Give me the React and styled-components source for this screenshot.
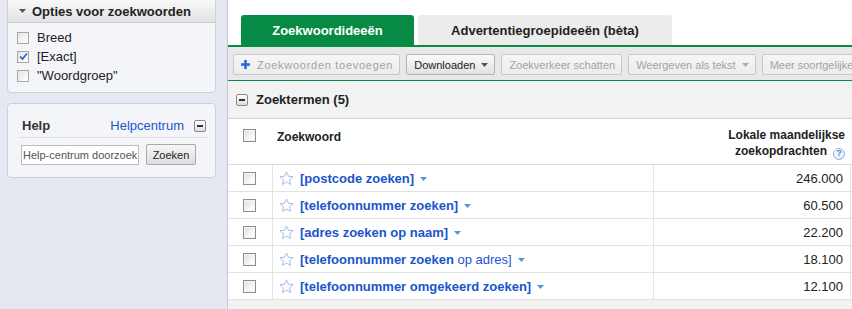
import React from 'react'
import styled, { createGlobalStyle } from 'styled-components'

const GREEN = '#078a43'
const LINK = '#1a55cc'

const GlobalStyle = createGlobalStyle`
  html, body {
    margin: 0;
    padding: 0;
  }
  body {
    font-family: "Liberation Sans", Arial, sans-serif;
    font-size: 13px;
    color: #222;
    background: #fff;
  }
`

const keywords = [
  { bold: '[postcode zoeken]', rest: '', volume: '246.000' },
  { bold: '[telefoonnummer zoeken]', rest: '', volume: '60.500' },
  { bold: '[adres zoeken op naam]', rest: '', volume: '22.200' },
  { bold: '[telefoonnummer zoeken', rest: ' op adres]', volume: '18.100' },
  { bold: '[telefoonnummer omgekeerd zoeken]', rest: '', volume: '12.100' },
]

const matchTypes = [
  { label: 'Breed', checked: false },
  { label: '[Exact]', checked: true },
  { label: '"Woordgroep"', checked: false },
]

const tools = [
  { label: 'Zoekwoorden toevoegen', plus: true, wide: true },
  { label: 'Downloaden', caret: true, enabled: true },
  { label: 'Zoekverkeer schatten' },
  { label: 'Weergeven als tekst', caret: true },
  { label: 'Meer soortgelijke resultaten' },
]

export default function App() {
  return (
    <>
      <GlobalStyle />
      <Page>
        <Sidebar>
          <Panel $top={-1} $flatTop>
            <PanelHeader>
              <HeaderArrow />
              Opties voor zoekwoorden
            </PanelHeader>
            <OptionList>
              {matchTypes.map((m) => (
                <Option key={m.label}>
                  <Check $checked={m.checked}>
                    {m.checked && (
                      <svg width="9" height="9" viewBox="0 0 9 9">
                        <path d="M1 4.5 L3.5 7 L8 1.5" fill="none" stroke="#2c5fc0" strokeWidth="1.6" />
                      </svg>
                    )}
                  </Check>
                  {m.label}
                </Option>
              ))}
            </OptionList>
          </Panel>

          <Panel $top={10}>
            <HelpBody>
              <HelpHead>
                <HelpTitle>Help</HelpTitle>
                <HelpLink>Helpcentrum</HelpLink>
                <Collapse />
              </HelpHead>
              <SearchRow>
                <SearchInput readOnly value="Help-centrum doorzoeken" />
                <SearchButton>Zoeken</SearchButton>
              </SearchRow>
            </HelpBody>
          </Panel>
        </Sidebar>

        <Main>
          <TabBar>
            <Tab $active $width={173}>Zoekwoordideeën</Tab>
            <Tab $width={254}>Advertentiegroepideeën (bèta)</Tab>
          </TabBar>

          <Toolbar>
            {tools.map((t) => (
              <ToolButton key={t.label} $enabled={t.enabled} $wide={t.wide}>
                {t.plus && <PlusIcon />}
                {t.label}
                {t.caret && <Caret $color={t.enabled ? '#555' : '#aaa'} />}
              </ToolButton>
            ))}
          </Toolbar>

          <SectionHead>
            <Collapse />
            <SectionTitle>Zoektermen (5)</SectionTitle>
          </SectionHead>

          <HeadRow>
            <HeadCell>
              <Box />
            </HeadCell>
            <HeadCell $text>Zoekwoord</HeadCell>
            <HeadCell $right>
              Lokale maandelijkse
              <br />
              zoekopdrachten<HelpIcon>?</HelpIcon>
            </HeadCell>
            <div />
          </HeadRow>

          {keywords.map((k) => (
            <Row key={k.bold + k.rest}>
              <Cell $center>
                <Box />
              </Cell>
              <Cell>
                <Star />
                <Keyword>
                  {k.bold}
                  {k.rest && <Plain>{k.rest}</Plain>}
                </Keyword>
                <Caret $color="#5d8fdb" />
              </Cell>
              <Cell $number>{k.volume}</Cell>
              <div />
            </Row>
          ))}
          <Filler />
        </Main>
      </Page>
    </>
  )
}

const HeaderArrow = () => (
  <svg width="7" height="4" viewBox="0 0 7 4" style={{ marginRight: 6 }}>
    <polygon points="0,0 7,0 3.5,4" fill="#555" />
  </svg>
)

const Caret = ({ $color }) => (
  <CaretWrap>
    <svg width="7" height="4" viewBox="0 0 7 4">
      <polygon points="0,0 7,0 3.5,4" fill={$color} />
    </svg>
  </CaretWrap>
)

const PlusIcon = () => (
  <svg width="9" height="9" viewBox="0 0 9 9" style={{ marginRight: 7 }}>
    <rect x="3.2" y="0" width="2.6" height="9" fill="#2a6bd1" />
    <rect x="0" y="3.2" width="9" height="2.6" fill="#2a6bd1" />
  </svg>
)

const Star = () => (
  <svg width="15" height="15" viewBox="0 0 24 24" style={{ marginRight: 6, flexShrink: 0 }}>
    <polygon
      points="12,1.5 15.1,8.4 22.5,9.1 16.9,14.1 18.5,21.5 12,17.7 5.5,21.5 7.1,14.1 1.5,9.1 8.9,8.4"
      fill="#fff"
      stroke="#a3bde8"
      strokeWidth="1.6"
      strokeLinejoin="round"
    />
  </svg>
)

const Page = styled.div`
  display: flex;
  width: 852px;
  height: 309px;
  overflow: hidden;
`

const Sidebar = styled.div`
  box-sizing: border-box;
  width: 228px;
  flex-shrink: 0;
  padding-left: 7px;
  background: #e5e8f1;
  border-right: 1px solid #c4c7ce;
`

const Panel = styled.div`
  box-sizing: border-box;
  width: 209px;
  margin-top: ${({ $top }) => $top}px;
  background: #f4f5f9;
  border: 1px solid #cdd0d7;
  border-radius: ${({ $flatTop }) => ($flatTop ? '0 0 4px 4px' : '4px')};
`

const PanelHeader = styled.div`
  display: flex;
  align-items: center;
  height: 22px;
  padding-left: 11px;
  font-weight: bold;
  color: #222;
  background: linear-gradient(#f8f8f8, #e3e3e3);
  border-bottom: 1px solid #cccccc;
`

const OptionList = styled.div`
  padding: 5px 0 7px 9px;
`

const Option = styled.div`
  display: flex;
  align-items: center;
  height: 19px;
  color: #222;
`

const Check = styled.span`
  box-sizing: border-box;
  display: inline-flex;
  align-items: center;
  justify-content: center;
  width: 12px;
  height: 12px;
  margin-right: 8px;
  border: 1px solid #a7a7a7;
  background: linear-gradient(135deg, #e4e4e4, #ffffff);
`

const HelpBody = styled.div`
  padding: 10px 7px 12px 11px;
`

const HelpHead = styled.div`
  display: flex;
  align-items: center;
  height: 23px;
  padding: 0 2px 0 3px;
  border-bottom: 1px solid #dcdde2;
`

const HelpTitle = styled.span`
  flex: 1;
  font-weight: bold;
  color: #333;
`

const HelpLink = styled.span`
  margin-right: 10px;
  color: ${LINK};
`

const Collapse = styled.span`
  position: relative;
  box-sizing: border-box;
  display: inline-block;
  width: 12px;
  height: 12px;
  border: 1px solid #8a8a8a;
  border-radius: 2px;
  background: linear-gradient(#ffffff, #dcdcdc);

  &::after {
    content: '';
    position: absolute;
    left: 2px;
    top: 4px;
    width: 6px;
    height: 2px;
    background: #333;
  }
`

const SearchRow = styled.div`
  display: flex;
  align-items: center;
  gap: 7px;
  margin-top: 6px;
  padding-left: 2px;
`

const SearchInput = styled.input`
  box-sizing: border-box;
  width: 118px;
  height: 20px;
  padding: 0 1px;
  border: 1px solid #bdbdbd;
  background: #fff;
  font-family: inherit;
  font-size: 11px;
  color: #555;
  outline: none;
`

const SearchButton = styled.button`
  box-sizing: border-box;
  width: 50px;
  height: 21px;
  padding: 0;
  border: 1px solid #a9a9a9;
  border-radius: 2px;
  background: linear-gradient(#f7f7f7, #dddddd);
  font-family: inherit;
  font-size: 11px;
  color: #222;
`

const Main = styled.div`
  flex: 1;
  display: flex;
  flex-direction: column;
  min-width: 0;
  background: #fff;
`

const TabBar = styled.div`
  display: flex;
  align-items: flex-end;
  gap: 4px;
  height: 45px;
  padding-left: 13px;
  border-bottom: 2px solid ${GREEN};
`

const Tab = styled.div`
  width: ${({ $width }) => $width}px;
  height: 30px;
  line-height: 31px;
  text-align: center;
  font-weight: bold;
  border-radius: 3px 3px 0 0;
  color: ${({ $active }) => ($active ? '#fff' : '#222')};
  background: ${({ $active }) => ($active ? GREEN : '#ececec')};
`

const Toolbar = styled.div`
  display: flex;
  align-items: flex-start;
  gap: 6px;
  height: 34px;
  padding: 7px 0 0 5px;
  box-sizing: border-box;
  background: #e8e8e8;
  border-bottom: 1px solid ${GREEN};
  overflow: hidden;
  white-space: nowrap;
`

const ToolButton = styled.div`
  box-sizing: border-box;
  display: flex;
  align-items: center;
  flex-shrink: 0;
  height: 21px;
  padding: 0 6px 0 7px;
  border: 1px solid ${({ $enabled }) => ($enabled ? '#b4b4b4' : '#c9c9c9')};
  border-radius: 2px;
  background: ${({ $enabled }) =>
    $enabled ? 'linear-gradient(#fafafa, #e2e2e2)' : 'linear-gradient(#f6f6f6, #ececec)'};
  font-size: 11px;
  letter-spacing: ${({ $wide }) => ($wide ? '0.72px' : '0')};
  color: ${({ $enabled }) => ($enabled ? '#222' : '#a3a3a3')};
`

const CaretWrap = styled.span`
  display: inline-flex;
  margin-left: 6px;
  margin-top: 1px;
`

const SectionHead = styled.div`
  display: flex;
  align-items: center;
  height: 37px;
  padding-left: 8px;
  background: #f2f2f2;
  border-bottom: 1px solid #d2d2d2;
`

const SectionTitle = styled.span`
  margin-left: 8px;
  font-weight: bold;
  color: #222;
`

const columns = '45px 381px 197px 1fr'

const HeadRow = styled.div`
  display: grid;
  grid-template-columns: ${columns};
  height: 46px;
  box-sizing: border-box;
  border-bottom: 1px solid #dedede;
`

const HeadCell = styled.div`
  padding-top: ${({ $text, $right }) => ($text ? 10 : $right ? 8 : 10)}px;
  padding-left: ${({ $text, $right }) => ($text ? 4 : $right ? 0 : 15)}px;
  padding-right: ${({ $right }) => ($right ? 6 : 0)}px;
  text-align: ${({ $right }) => ($right ? 'right' : 'left')};
  font-size: 12px;
  font-weight: bold;
  line-height: 16px;
  color: #222;
`

const HelpIcon = styled.span`
  box-sizing: border-box;
  display: inline-flex;
  align-items: center;
  justify-content: center;
  width: 12px;
  height: 12px;
  margin-left: 6px;
  vertical-align: -1px;
  border: 1px solid #93b3da;
  border-radius: 50%;
  background: radial-gradient(circle at 40% 35%, #ffffff, #d7e4f5);
  font-size: 9px;
  line-height: 1;
  color: #5b84bb;
`

const Row = styled.div`
  display: grid;
  grid-template-columns: ${columns};
  height: 27px;
  box-sizing: border-box;
  border-bottom: 1px solid #e1e1e1;
`

const Cell = styled.div`
  box-sizing: border-box;
  display: flex;
  align-items: center;
  justify-content: ${({ $number }) => ($number ? 'flex-end' : 'flex-start')};
  padding: ${({ $center, $number }) => ($center ? '0 0 0 15px' : $number ? '0 7px 0 0' : '0 0 0 6px')};
  border-right: 1px solid #e4e4e4;
  white-space: nowrap;
  color: #222;
`

const Box = styled.span`
  box-sizing: border-box;
  display: inline-block;
  width: 13px;
  height: 13px;
  border: 1px solid #8f8f8f;
  background: linear-gradient(135deg, #dcdcdc, #ffffff 80%);
  box-shadow: inset 0 0 0 1px #f4f4f4;
`

const Keyword = styled.span`
  font-weight: bold;
  color: ${LINK};
`

const Plain = styled.span`
  font-weight: normal;
`

const Filler = styled.div`
  flex: 1;
  background: #f2f2f2;
`
